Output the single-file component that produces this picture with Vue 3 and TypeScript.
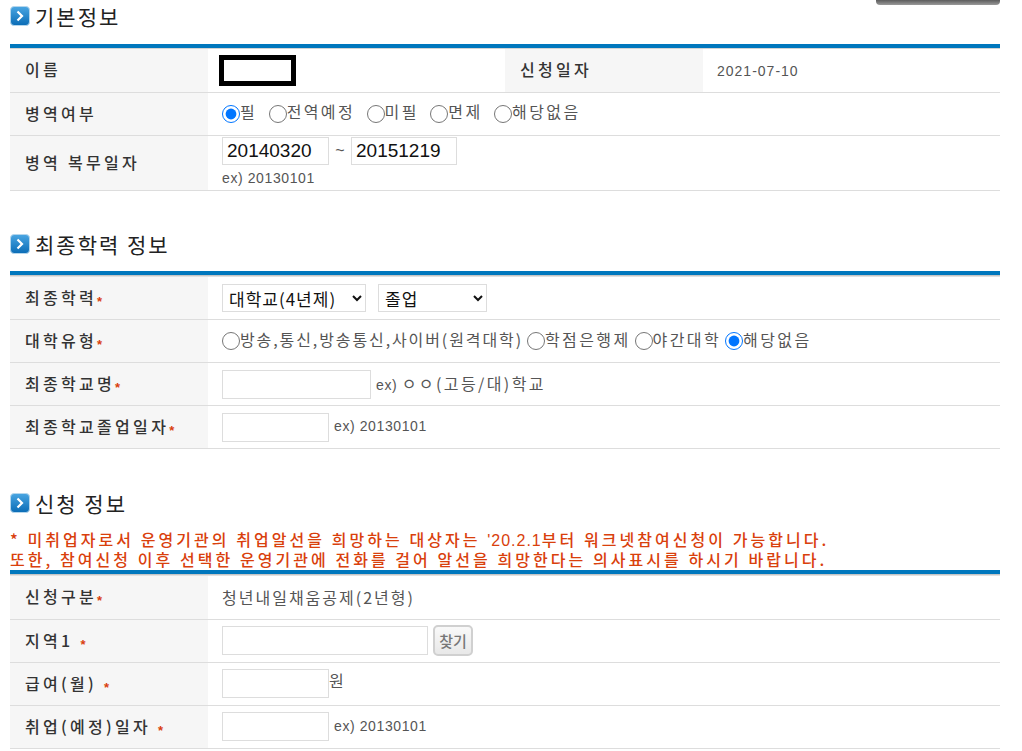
<script setup lang="ts">
interface Opt { label: string; checked?: boolean }
const military: Opt[] = [
  { label: '필', checked: true },
  { label: '전역예정' },
  { label: '미필' },
  { label: '면제' },
  { label: '해당없음' },
]
const college: Opt[] = [
  { label: '방송,통신,방송통신,사이버(원격대학)' },
  { label: '학점은행제' },
  { label: '야간대학' },
  { label: '해당없음', checked: true },
]
</script>

<template>
  <div class="page">
    <svg class="defs" width="0" height="0"><defs><linearGradient id="g" x1="0" y1="0" x2="0" y2="1"><stop offset="0" stop-color="#4aa6e2"/><stop offset="1" stop-color="#0a6cb6"/></linearGradient></defs></svg>
    <div class="head first">
      <h2 class="title"><span class="ico"><svg viewBox="0 0 20 20" width="20" height="20"><rect x="0.5" y="0.5" width="19" height="19" rx="3.5" fill="url(#g)" stroke="#b5d6ec"/><path d="M7.5 5.5l4.5 4.5-4.5 4.5" fill="none" stroke="#fff" stroke-width="2.2"/></svg></span>기본정보</h2>
      <div class="topbtn"></div>
    </div>
    <div class="bar short"></div>
    <table class="tbl">
      <colgroup><col class="c1" /><col class="c2" /><col class="c1" /><col /></colgroup>
      <tbody>
        <tr>
          <th>이름</th>
          <td><div class="redact"></div></td>
          <th>신청일자</th>
          <td class="date">2021-07-10</td>
        </tr>
        <tr>
          <th>병역여부</th>
          <td colspan="3" class="radios">
            <label v-for="o in military" :key="o.label" class="rad gap"><input type="radio" name="m" :checked="o.checked" />{{ o.label }}</label>
          </td>
        </tr>
        <tr>
          <th>병역 복무일자</th>
          <td colspan="3" class="tall">
            <div class="dates"><input class="inp w107 big" value="20140320" /><span class="tilde">~</span><input class="inp w106 big" value="20151219" /></div>
            <div class="ex">ex) 20130101</div>
          </td>
        </tr>
      </tbody>
    </table>

    <div class="head second">
      <h2 class="title"><span class="ico"><svg viewBox="0 0 20 20" width="20" height="20"><rect x="0.5" y="0.5" width="19" height="19" rx="3.5" fill="url(#g)" stroke="#b5d6ec"/><path d="M7.5 5.5l4.5 4.5-4.5 4.5" fill="none" stroke="#fff" stroke-width="2.2"/></svg></span>최종학력 정보</h2>
    </div>
    <div class="bar"></div>
    <table class="tbl">
      <colgroup><col class="c1" /><col /></colgroup>
      <tbody>
        <tr>
          <th>최종학력<i>*</i></th>
          <td>
            <div class="sels">
              <select class="sel s1"><option>대학교(4년제)</option></select>
              <select class="sel s2"><option>졸업</option></select>
            </div>
          </td>
        </tr>
        <tr>
          <th>대학유형<i>*</i></th>
          <td class="radios">
            <label v-for="(o, i) in college" :key="o.label" class="rad tight" :class="{ long: i === 0 }"><input type="radio" name="c" :checked="o.checked" />{{ o.label }}</label>
          </td>
        </tr>
        <tr>
          <th>최종학교명<i>*</i></th>
          <td><div class="line"><input class="inp w149" /><span class="ex sp">ex) <span class="ko">ㅇㅇ(고등/대)학교</span></span></div></td>
        </tr>
        <tr>
          <th>최종학교졸업일자<i>*</i></th>
          <td><div class="line"><input class="inp w107" /><span class="ex sp">ex) 20130101</span></div></td>
        </tr>
      </tbody>
    </table>

    <div class="head third">
      <h2 class="title"><span class="ico"><svg viewBox="0 0 20 20" width="20" height="20"><rect x="0.5" y="0.5" width="19" height="19" rx="3.5" fill="url(#g)" stroke="#b5d6ec"/><path d="M7.5 5.5l4.5 4.5-4.5 4.5" fill="none" stroke="#fff" stroke-width="2.2"/></svg></span>신청 정보</h2>
    </div>
    <p class="notice">* 미취업자로서 운영기관의 취업알선을 희망하는 대상자는 <span class="num">'20.2.1</span>부터 워크넷참여신청이 가능합니다.<br />또한, 참여신청 이후 선택한 운영기관에 전화를 걸어 알선을 희망한다는 의사표시를 하시기 바랍니다.</p>
    <div class="bar"></div>
    <table class="tbl">
      <colgroup><col class="c1" /><col /></colgroup>
      <tbody>
        <tr>
          <th>신청구분<i>*</i></th>
          <td class="plain">청년내일채움공제(2년형)</td>
        </tr>
        <tr>
          <th>지역1 <i>*</i></th>
          <td><div class="line"><input class="inp w206" /><button class="find" type="button">찾기</button></div></td>
        </tr>
        <tr>
          <th>급여(월) <i>*</i></th>
          <td><div class="line"><input class="inp w107" /><span class="won">원</span></div></td>
        </tr>
        <tr>
          <th>취업(예정)일자 <i>*</i></th>
          <td><div class="line"><input class="inp w107" /><span class="ex sp">ex) 20130101</span></div></td>
        </tr>
      </tbody>
    </table>
  </div>
</template>

<style>
html, body { margin: 0; background: #fff; overflow: hidden; }
</style>

<style scoped>
.page {
  width: 990px;
  height: 751px;
  overflow: hidden;
  padding: 0 22px 0 10px;
  font-family: "Liberation Sans", "Noto Sans CJK KR", sans-serif;
  color: #444;
}
.defs { position: absolute; }
.head { display: flex; justify-content: space-between; align-items: flex-start; }
.first { height: 44px; }
.second { height: 80px; align-items: flex-end; }
.third { height: 42px; margin-top: 38px; }
.title {
  margin: 0;
  display: flex;
  align-items: center;
  gap: 5px;
  height: 32px;
  font-family: "Noto Sans CJK KR", sans-serif;
  font-size: 21px;
  font-weight: 400;
  letter-spacing: 2px;
  color: #222;
}
.second .title { margin-bottom: 11px; }
.ico { display: flex; flex: none; }
.topbtn {
  width: 124px;
  height: 5px;
  border-radius: 0 0 4px 4px;
  background: linear-gradient(#5c5c5c, #9a9a9a);
}
.notice {
  margin: 0;
  height: 41px;
  font-family: "Noto Sans CJK KR", sans-serif;
  font-size: 16px;
  font-weight: 500;
  line-height: 20px;
  letter-spacing: 3.05px;
  color: #d9400c;
  white-space: nowrap;
}
.num { font-family: "Liberation Sans", sans-serif; font-size: 16px; line-height: 1; letter-spacing: 1px; }
.bar {
  box-sizing: border-box;
  height: 6px;
  border-top: 4px solid #0077bd;
  background: linear-gradient(#b8b8b8, #eee);
}
.bar.short { height: 5px; }
.tbl {
  width: 990px;
  table-layout: fixed;
  border-collapse: collapse;
}
.c1 { width: 198px; }
.c2 { width: 297px; }
tr { height: 43px; border-bottom: 1px solid #ddd; }
th {
  box-sizing: border-box;
  background: #f6f6f6;
  padding: 0 0 2px 15px;
  text-align: left;
  font-family: "Noto Sans CJK KR", sans-serif;
  font-size: 16px;
  font-weight: 500;
  letter-spacing: 3.3px;
  color: #333;
  white-space: nowrap;
}
th i {
  font-family: "Liberation Sans", sans-serif;
  font-style: normal;
  font-weight: 700;
  font-size: 13px;
  color: #d9400c;
  letter-spacing: 0;
  vertical-align: -2px;
}
td {
  padding: 0 0 0 14px;
  font-size: 14px;
  color: #555;
  white-space: nowrap;
}
.redact {
  box-sizing: border-box;
  width: 77px;
  height: 31px;
  margin-left: -3px;
  border: 5px solid #000;
  background: #fff;
}
.date { letter-spacing: 1px; padding-top: 1px; }
.radios, .plain, .ko, .won {
  font-family: "Noto Sans CJK KR", sans-serif;
  font-size: 16px;
  letter-spacing: 2.4px;
}
.plain { letter-spacing: 2px; }
.rad { display: inline-flex; align-items: center; }
.rad.gap { margin-right: 11.5px; }
.rad.tight { margin-right: 4px; }
.rad.long { letter-spacing: 1.9px; }
.rad input {
  width: 18px;
  height: 18px;
  margin: 5px 0 0 0;
  accent-color: #0075ff;
}
.tall { height: 52px; padding-bottom: 2px; }
.dates { display: flex; align-items: center; }
.inp {
  box-sizing: border-box;
  height: 29px;
  padding: 0 4px;
  border: 1px solid #ddd;
  font-family: "Liberation Sans", sans-serif;
  color: #111;
  outline: none;
  background: #fff;
}
.big { font-size: 19px; height: 28px; }
.w107 { width: 107px; }
.w106 { width: 106px; }
.w149 { width: 149px; }
.w206 { width: 206px; }
.tilde { width: 22px; text-align: center; font-size: 16px; color: #555; }
.ex { font-size: 14px; letter-spacing: 0.6px; color: #555; }
.tall .ex { margin-top: 5px; }
.sp { margin: -2px 0 0 5px; }
.sels { display: flex; gap: 12px; }
.sel {
  box-sizing: border-box;
  height: 28px;
  padding-left: 2px;
  border: 1px solid #ddd;
  border-radius: 0;
  background: #fff;
  font-family: "Noto Sans CJK KR", sans-serif;
  font-size: 17px;
  color: #111;
  letter-spacing: 1px;
  outline: none;
}
.s1 { width: 144px; }
.s2 { width: 109px; }
.line { display: flex; align-items: center; }
.find {
  box-sizing: border-box;
  width: 40px;
  height: 31px;
  margin-left: 5px;
  padding: 0;
  border: 2px solid #d0d0d0;
  border-radius: 5px;
  background: linear-gradient(#f9f9f9, #e8e8e8);
  font-family: "Noto Sans CJK KR", sans-serif;
  font-size: 15px;
  font-weight: 500;
  color: #777;
}
.won { margin-top: -8px; letter-spacing: 0; }
</style>
